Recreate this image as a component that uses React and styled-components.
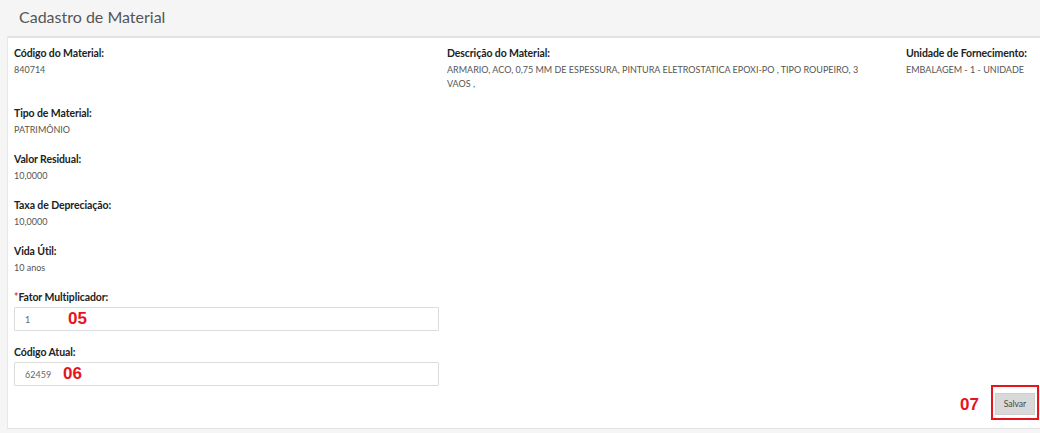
import React from "react";
import styled, { createGlobalStyle } from "styled-components";

const GlobalStyle = createGlobalStyle`
  html, body {
    margin: 0;
    padding: 0;
    background: #f5f5f5;
    font-family: "Lato", "Open Sans", sans-serif;
  }
`;

const Page = styled.div`
  width: 1040px;
  height: 433px;
  overflow: hidden;
  background: #f5f5f5;
`;

const Header = styled.header`
  height: 36px;
  display: flex;
  align-items: center;
  padding-left: 19px;
  padding-bottom: 3px;
  box-sizing: border-box;
  h1 {
    margin: 0;
    font-size: 16px;
    font-weight: 400;
    color: #555;
  }
`;

const Panel = styled.section`
  margin-left: 7px;
  height: 393px;
  box-sizing: border-box;
  background: #fff;
  border-top: 2px solid #e2e2e2;
  border-left: 1px solid #e8e8e8;
  border-bottom: 1px solid #e2e2e2;
  padding: 8px 0 0 6px;
  display: flex;
  flex-direction: column;
`;

const Grid = styled.div`
  display: grid;
  grid-template-columns: 433px 459px 1fr;
`;

const Column = styled.div`
  display: flex;
  flex-direction: column;
  padding-right: ${(p) => p.$pr || 0}px;
`;

const Field = styled.div`
  margin-bottom: ${(p) => (p.$tight ? 14 : 15)}px;
  position: relative;
`;

const Label = styled.div`
  font-size: 10.5px;
  font-weight: 700;
  line-height: 14px;
  color: #222;
  margin-bottom: 3px;
  letter-spacing: -0.1px;
`;

const Required = styled.span`
  color: #e23b3b;
`;

const Value = styled.div`
  font-size: 9px;
  line-height: 14px;
  color: #555;
`;

const InputWrap = styled.div`
  position: relative;
  width: 425px;
`;

const Input = styled.input`
  display: block;
  width: 100%;
  height: 24px;
  box-sizing: border-box;
  border: 1px solid #dcdcdc;
  border-radius: 1px;
  padding: 0 10px;
  font-family: "Lato", sans-serif;
  font-size: 9px;
  color: #666;
  background: #fff;
  outline: none;
`;

const Marker = styled.span`
  position: absolute;
  left: ${(p) => p.$left}px;
  top: 50%;
  transform: translateY(-50%);
  font-family: "Liberation Sans", Arial, sans-serif;
  font-weight: 700;
  font-size: 17px;
  color: #e8141c;
  pointer-events: none;
`;

const Footer = styled.div`
  display: flex;
  justify-content: flex-end;
  align-items: center;
  gap: 12px;
  margin-top: -16px;
  padding-right: 1px;
`;

const StepNumber = styled.span`
  font-family: "Liberation Sans", Arial, sans-serif;
  font-weight: 700;
  font-size: 17px;
  color: #e8141c;
  margin-top: 4px;
`;

const Highlight = styled.div`
  border: 2px solid #e8141c;
  padding: 6px 2px 3px 2px;
  display: flex;
`;

const Button = styled.button`
  width: 40px;
  height: 22px;
  border: 1px solid #cfcfcf;
  background: #d9d9d9;
  color: #444;
  font-family: "Lato", sans-serif;
  font-size: 8.5px;
  padding: 0;
  cursor: pointer;
`;

const App = () => {
  return (
    <Page>
      <GlobalStyle />
      <Header>
        <h1>Cadastro de Material</h1>
      </Header>
      <Panel>
        <Grid>
          <Column>
            <Field>
              <Label>Código do Material:</Label>
              <Value>840714</Value>
            </Field>
          </Column>
          <Column $pr={30}>
            <Field>
              <Label>Descrição do Material:</Label>
              <Value>
                ARMARIO, ACO, 0,75 MM DE ESPESSURA, PINTURA ELETROSTATICA EPOXI-PO , TIPO ROUPEIRO, 3 VAOS ,
              </Value>
            </Field>
          </Column>
          <Column>
            <Field>
              <Label>Unidade de Fornecimento:</Label>
              <Value>EMBALAGEM - 1 - UNIDADE</Value>
            </Field>
          </Column>
        </Grid>
        <Column>
          <Field>
            <Label>Tipo de Material:</Label>
            <Value>PATRIMÔNIO</Value>
          </Field>
          <Field>
            <Label>Valor Residual:</Label>
            <Value>10,0000</Value>
          </Field>
          <Field>
            <Label>Taxa de Depreciação:</Label>
            <Value>10,0000</Value>
          </Field>
          <Field>
            <Label>Vida Útil:</Label>
            <Value>10 anos</Value>
          </Field>
          <Field $tight>
            <Label>
              <Required>*</Required>Fator Multiplicador:
            </Label>
            <InputWrap>
              <Input defaultValue="1" />
              <Marker $left={54}>05</Marker>
            </InputWrap>
          </Field>
          <Field>
            <Label>Código Atual:</Label>
            <InputWrap>
              <Input defaultValue="62459" />
              <Marker $left={49}>06</Marker>
            </InputWrap>
          </Field>
        </Column>
        <Footer>
          <StepNumber>07</StepNumber>
          <Highlight>
            <Button>Salvar</Button>
          </Highlight>
        </Footer>
      </Panel>
    </Page>
  );
};

export default App;
